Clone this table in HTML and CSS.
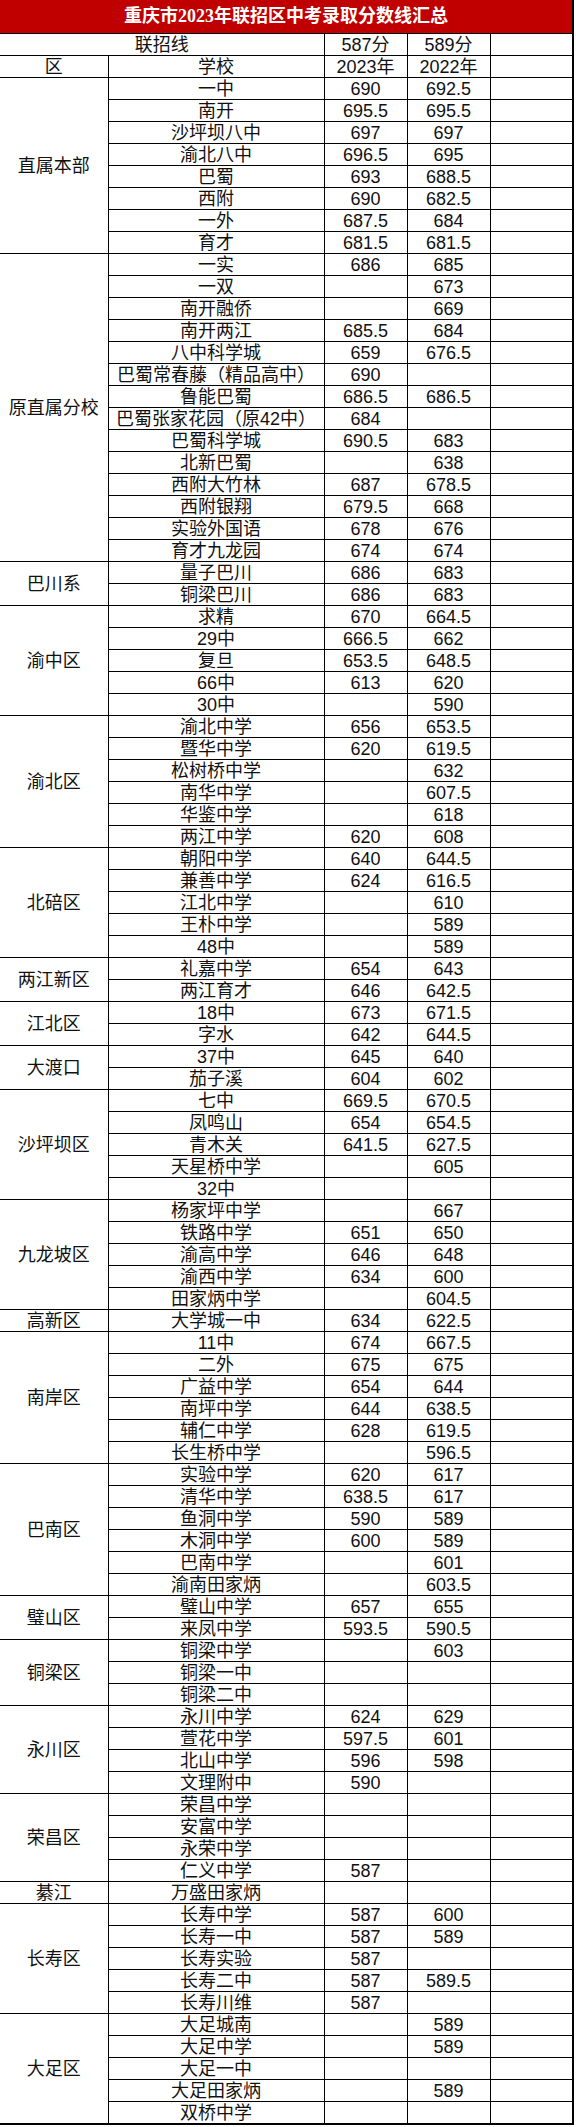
FILE: index.html
```html
<!DOCTYPE html>
<html lang="zh-CN">
<head>
<meta charset="utf-8">
<title>重庆市2023年联招区中考录取分数线汇总</title>
<link rel="stylesheet" href="styles.css">
</head>
<body>
<div class="sheet">
<div class="title">重庆市2023年联招区中考录取分数线汇总</div>
<table class="scores">
<colgroup><col class="c-dist"><col class="c-school"><col class="c-num"><col class="c-num"><col class="c-num"></colgroup>
<tbody>
<tr><td colspan="2">联招线</td><td>587分</td><td>589分</td><td></td></tr>
<tr><td>区</td><td>学校</td><td>2023年</td><td>2022年</td><td></td></tr>

<tr><td rowspan="8" class="dist">直属本部</td><td>一中</td><td>690</td><td>692.5</td><td></td></tr>
<tr><td>南开</td><td>695.5</td><td>695.5</td><td></td></tr>
<tr><td>沙坪坝八中</td><td>697</td><td>697</td><td></td></tr>
<tr><td>渝北八中</td><td>696.5</td><td>695</td><td></td></tr>
<tr><td>巴蜀</td><td>693</td><td>688.5</td><td></td></tr>
<tr><td>西附</td><td>690</td><td>682.5</td><td></td></tr>
<tr><td>一外</td><td>687.5</td><td>684</td><td></td></tr>
<tr><td>育才</td><td>681.5</td><td>681.5</td><td></td></tr>

<tr><td rowspan="14" class="dist">原直属分校</td><td>一实</td><td>686</td><td>685</td><td></td></tr>
<tr><td>一双</td><td></td><td>673</td><td></td></tr>
<tr><td>南开融侨</td><td></td><td>669</td><td></td></tr>
<tr><td>南开两江</td><td>685.5</td><td>684</td><td></td></tr>
<tr><td>八中科学城</td><td>659</td><td>676.5</td><td></td></tr>
<tr><td>巴蜀常春藤（精品高中）</td><td>690</td><td></td><td></td></tr>
<tr><td>鲁能巴蜀</td><td>686.5</td><td>686.5</td><td></td></tr>
<tr><td>巴蜀张家花园（原42中）</td><td>684</td><td></td><td></td></tr>
<tr><td>巴蜀科学城</td><td>690.5</td><td>683</td><td></td></tr>
<tr><td>北新巴蜀</td><td></td><td>638</td><td></td></tr>
<tr><td>西附大竹林</td><td>687</td><td>678.5</td><td></td></tr>
<tr><td>西附银翔</td><td>679.5</td><td>668</td><td></td></tr>
<tr><td>实验外国语</td><td>678</td><td>676</td><td></td></tr>
<tr><td>育才九龙园</td><td>674</td><td>674</td><td></td></tr>

<tr><td rowspan="2" class="dist">巴川系</td><td>量子巴川</td><td>686</td><td>683</td><td></td></tr>
<tr><td>铜梁巴川</td><td>686</td><td>683</td><td></td></tr>

<tr><td rowspan="5" class="dist">渝中区</td><td>求精</td><td>670</td><td>664.5</td><td></td></tr>
<tr><td>29中</td><td>666.5</td><td>662</td><td></td></tr>
<tr><td>复旦</td><td>653.5</td><td>648.5</td><td></td></tr>
<tr><td>66中</td><td>613</td><td>620</td><td></td></tr>
<tr><td>30中</td><td></td><td>590</td><td></td></tr>

<tr><td rowspan="6" class="dist">渝北区</td><td>渝北中学</td><td>656</td><td>653.5</td><td></td></tr>
<tr><td>暨华中学</td><td>620</td><td>619.5</td><td></td></tr>
<tr><td>松树桥中学</td><td></td><td>632</td><td></td></tr>
<tr><td>南华中学</td><td></td><td>607.5</td><td></td></tr>
<tr><td>华鉴中学</td><td></td><td>618</td><td></td></tr>
<tr><td>两江中学</td><td>620</td><td>608</td><td></td></tr>

<tr><td rowspan="5" class="dist">北碚区</td><td>朝阳中学</td><td>640</td><td>644.5</td><td></td></tr>
<tr><td>兼善中学</td><td>624</td><td>616.5</td><td></td></tr>
<tr><td>江北中学</td><td></td><td>610</td><td></td></tr>
<tr><td>王朴中学</td><td></td><td>589</td><td></td></tr>
<tr><td>48中</td><td></td><td>589</td><td></td></tr>

<tr><td rowspan="2" class="dist">两江新区</td><td>礼嘉中学</td><td>654</td><td>643</td><td></td></tr>
<tr><td>两江育才</td><td>646</td><td>642.5</td><td></td></tr>

<tr><td rowspan="2" class="dist">江北区</td><td>18中</td><td>673</td><td>671.5</td><td></td></tr>
<tr><td>字水</td><td>642</td><td>644.5</td><td></td></tr>

<tr><td rowspan="2" class="dist">大渡口</td><td>37中</td><td>645</td><td>640</td><td></td></tr>
<tr><td>茄子溪</td><td>604</td><td>602</td><td></td></tr>

<tr><td rowspan="5" class="dist">沙坪坝区</td><td>七中</td><td>669.5</td><td>670.5</td><td></td></tr>
<tr><td>凤鸣山</td><td>654</td><td>654.5</td><td></td></tr>
<tr><td>青木关</td><td>641.5</td><td>627.5</td><td></td></tr>
<tr><td>天星桥中学</td><td></td><td>605</td><td></td></tr>
<tr><td>32中</td><td></td><td></td><td></td></tr>

<tr><td rowspan="5" class="dist">九龙坡区</td><td>杨家坪中学</td><td></td><td>667</td><td></td></tr>
<tr><td>铁路中学</td><td>651</td><td>650</td><td></td></tr>
<tr><td>渝高中学</td><td>646</td><td>648</td><td></td></tr>
<tr><td>渝西中学</td><td>634</td><td>600</td><td></td></tr>
<tr><td>田家炳中学</td><td></td><td>604.5</td><td></td></tr>

<tr><td class="dist">高新区</td><td>大学城一中</td><td>634</td><td>622.5</td><td></td></tr>

<tr><td rowspan="6" class="dist">南岸区</td><td>11中</td><td>674</td><td>667.5</td><td></td></tr>
<tr><td>二外</td><td>675</td><td>675</td><td></td></tr>
<tr><td>广益中学</td><td>654</td><td>644</td><td></td></tr>
<tr><td>南坪中学</td><td>644</td><td>638.5</td><td></td></tr>
<tr><td>辅仁中学</td><td>628</td><td>619.5</td><td></td></tr>
<tr><td>长生桥中学</td><td></td><td>596.5</td><td></td></tr>

<tr><td rowspan="6" class="dist">巴南区</td><td>实验中学</td><td>620</td><td>617</td><td></td></tr>
<tr><td>清华中学</td><td>638.5</td><td>617</td><td></td></tr>
<tr><td>鱼洞中学</td><td>590</td><td>589</td><td></td></tr>
<tr><td>木洞中学</td><td>600</td><td>589</td><td></td></tr>
<tr><td>巴南中学</td><td></td><td>601</td><td></td></tr>
<tr><td>渝南田家炳</td><td></td><td>603.5</td><td></td></tr>

<tr><td rowspan="2" class="dist">璧山区</td><td>璧山中学</td><td>657</td><td>655</td><td></td></tr>
<tr><td>来凤中学</td><td>593.5</td><td>590.5</td><td></td></tr>

<tr><td rowspan="3" class="dist">铜梁区</td><td>铜梁中学</td><td></td><td>603</td><td></td></tr>
<tr><td>铜梁一中</td><td></td><td></td><td></td></tr>
<tr><td>铜梁二中</td><td></td><td></td><td></td></tr>

<tr><td rowspan="4" class="dist">永川区</td><td>永川中学</td><td>624</td><td>629</td><td></td></tr>
<tr><td>萱花中学</td><td>597.5</td><td>601</td><td></td></tr>
<tr><td>北山中学</td><td>596</td><td>598</td><td></td></tr>
<tr><td>文理附中</td><td>590</td><td></td><td></td></tr>

<tr><td rowspan="4" class="dist">荣昌区</td><td>荣昌中学</td><td></td><td></td><td></td></tr>
<tr><td>安富中学</td><td></td><td></td><td></td></tr>
<tr><td>永荣中学</td><td></td><td></td><td></td></tr>
<tr><td>仁义中学</td><td>587</td><td></td><td></td></tr>

<tr><td class="dist">綦江</td><td>万盛田家炳</td><td></td><td></td><td></td></tr>

<tr><td rowspan="5" class="dist">长寿区</td><td>长寿中学</td><td>587</td><td>600</td><td></td></tr>
<tr><td>长寿一中</td><td>587</td><td>589</td><td></td></tr>
<tr><td>长寿实验</td><td>587</td><td></td><td></td></tr>
<tr><td>长寿二中</td><td>587</td><td>589.5</td><td></td></tr>
<tr><td>长寿川维</td><td>587</td><td></td><td></td></tr>

<tr><td rowspan="5" class="dist">大足区</td><td>大足城南</td><td></td><td>589</td><td></td></tr>
<tr><td>大足中学</td><td></td><td>589</td><td></td></tr>
<tr><td>大足一中</td><td></td><td></td><td></td></tr>
<tr><td>大足田家炳</td><td></td><td>589</td><td></td></tr>
<tr><td>双桥中学</td><td></td><td></td><td></td></tr>
</tbody>
</table>
</div>
</body>
</html>
```

FILE: styles.css
```css
html, body {
  margin: 0;
  padding: 0;
  background: #ffffff;
}

body {
  width: 576px;
  font-family: "Liberation Sans", "Noto Sans CJK SC", sans-serif;
  color: #111111;
}

.sheet {
  width: 574px;
}

.title {
  box-sizing: border-box;
  height: 34px;
  background: #c00000;
  color: #ffffff;
  border-bottom: 1px solid #000000;
  border-right: 2px solid #000000;
  text-align: center;
  font-family: "Liberation Serif", "Noto Sans CJK SC", serif;
  font-weight: bold;
  font-size: 18px;
  line-height: 33px;
}

.scores {
  border-collapse: collapse;
  table-layout: fixed;
  width: 574px;
  border-right: 2px solid #000000;
  border-bottom: 2px solid #000000;
}

.c-dist { width: 108px; }
.c-school { width: 216px; }
.c-num { width: 83px; }

.scores td {
  height: 21px;
  padding: 0;
  border: 1px solid #000000;
  text-align: center;
  vertical-align: middle;
  font-size: 18px;
  line-height: 20px;
  white-space: nowrap;
  overflow: hidden;
}

.scores tr:first-child td {
  border-top: none;
}

.scores tr td:first-child {
  border-left: none;
}

.scores td.dist {
  border-left: none;
}
```
